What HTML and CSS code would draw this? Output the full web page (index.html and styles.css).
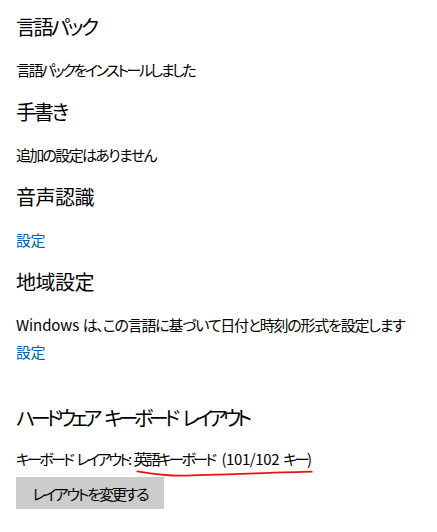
FILE: index.html
```html
<!DOCTYPE html>
<html lang="ja">
<head>
<meta charset="utf-8">
<link rel="stylesheet" href="styles.css">
</head>
<body>
<main class="page">
  <section class="section">
    <h2 class="heading tight-1">言語パック</h2>
    <p class="text sq-1">言語パックをインストールしました</p>
  </section>
  <section class="section">
    <h2 class="heading tight-2">手書き</h2>
    <p class="text sq-2">追加の設定はありません</p>
  </section>
  <section class="section">
    <h2 class="heading">音声認識</h2>
    <a class="link" href="#">設定</a>
  </section>
  <section class="section region">
    <h2 class="heading">地域設定</h2>
    <p class="text sq-3"><span class="latin">Windows</span> は、この言語に基づいて日付と時刻の形式を設定します</p>
    <a class="link link-tight" href="#">設定</a>
  </section>
  <section class="section keyboard">
    <h2 class="heading tight-3 kb-heading">ハードウェア キーボード レイアウト</h2>
    <p class="text sq-4 kb-line">キーボード レイアウト: 英語キーボード <span class="latin num">(101/102</span> <span class="tail">キー)</span><svg class="scribble" viewBox="0 0 180 10" width="180" height="10" aria-hidden="true"><path d="M1.3 2.3 C 15 4.5, 30 6.7, 44 6.7 S 140 3.5, 175.7 2.7" fill="none" stroke="#ec0f17" stroke-width="1.8" stroke-linecap="round"/></svg></p>
    <button class="btn" type="button">レイアウトを変更する</button>
  </section>
</main>
</body>
</html>
```
FILE: styles.css
```css
html, body {
  margin: 0;
  padding: 0;
  background: #ffffff;
}
body {
  font-family: "Noto Sans CJK JP", "Noto Sans", sans-serif;
  font-feature-settings: "palt";
  color: #000000;
  width: 437px;
  height: 532px;
  overflow: hidden;
}
.page {
  display: flex;
  flex-direction: column;
  padding: 13px 16px 0 16px;
}
.section {
  display: flex;
  flex-direction: column;
  align-items: flex-start;
  margin-bottom: 18px;
}
.heading {
  margin: 0 0 19px 0;
  font-size: 20px;
  line-height: 28px;
  font-weight: 400;
  letter-spacing: -0.5px;
  white-space: nowrap;
}
.tight-1 { letter-spacing: -2.4px; }
.tight-2 { letter-spacing: -2.2px; }
.tight-3 { letter-spacing: -4.3px; word-spacing: 6px; }
.kb-heading { margin-bottom: 17px; }
.text {
  margin: 0;
  font-size: 15px;
  line-height: 20px;
  font-weight: 400;
  white-space: nowrap;
}
.sq-1 { letter-spacing: -2.4px; }
.sq-2 { letter-spacing: -1.7px; }
.sq-3 { letter-spacing: -1.25px; word-spacing: 1.5px; }
.sq-4 { letter-spacing: -2.75px; word-spacing: 3.5px; }
.latin { letter-spacing: -0.1px; }
.num { letter-spacing: -0.4px; margin-left: 3px; }
.tail { letter-spacing: -2.5px; }
.link {
  font-size: 15px;
  line-height: 20px;
  color: #0063b1;
  text-decoration: none;
  letter-spacing: -0.5px;
}
.link-tight {
  margin-top: 7px;
}
.region {
  margin-bottom: 42px;
}
.kb-line {
  position: relative;
}
.scribble {
  position: absolute;
  left: 120px;
  top: 20px;
  overflow: visible;
}
.btn {
  margin-top: 8px;
  width: 148px;
  height: 32px;
  border: none;
  background: #cccccc;
  font-family: inherit;
  font-feature-settings: "palt";
  font-size: 15px;
  font-weight: 400;
  letter-spacing: -2.1px;
  color: #000000;
  padding: 0;
}
```
